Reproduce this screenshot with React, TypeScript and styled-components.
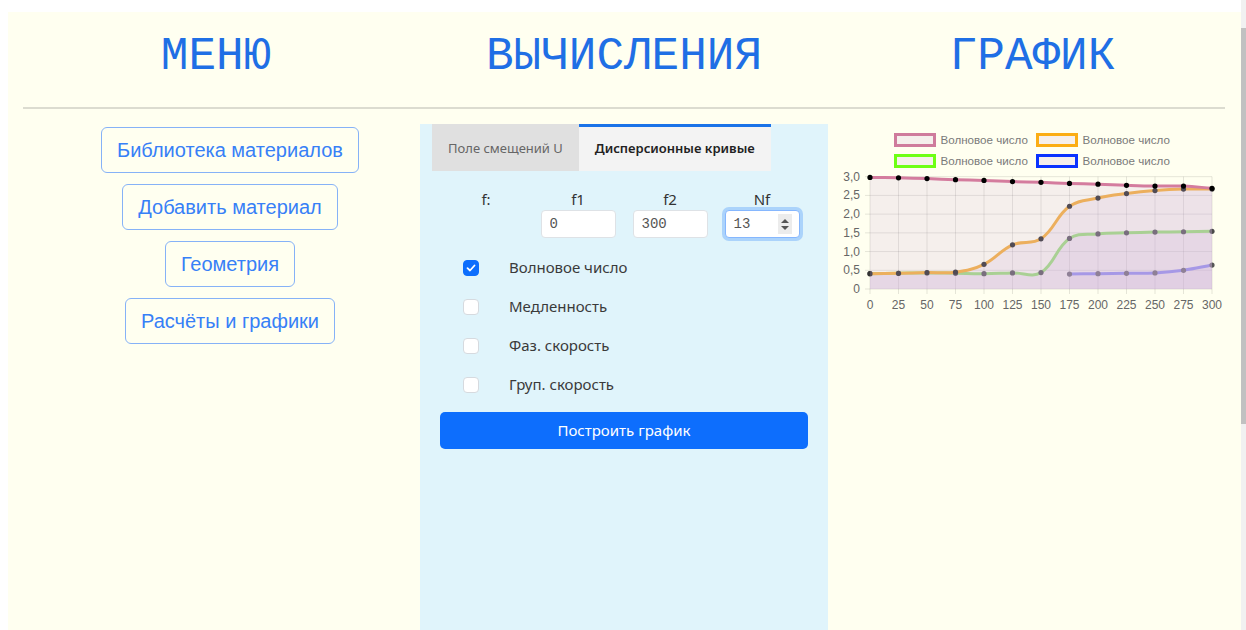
import React from 'react'
import styled, { createGlobalStyle } from 'styled-components'

const GlobalStyle = createGlobalStyle`
  html, body {
    margin: 0;
    padding: 0;
    height: 100%;
    overflow: hidden;
    background: #ffffff;
  }
  #root {
    height: 100%;
  }
  * {
    box-sizing: border-box;
  }
`

const uiFont = `"Noto Sans", "Open Sans", sans-serif`

const Screen = styled.div`
  display: flex;
  height: 100%;
`
const Page = styled.div`
  flex: 1;
  display: flex;
  padding: 12px 0 0 8px;
`
const Sheet = styled.main`
  flex: 1;
  display: flex;
  flex-direction: column;
  background: #fffff0;
`
const ScrollTrack = styled.div`
  width: 5px;
  background: #f1f1f1;
  padding-top: 28px;
`
const ScrollThumb = styled.div`
  height: 396px;
  background: #c1c1c1;
`

const Header = styled.header`
  display: grid;
  grid-template-columns: 416px 400px 1fr;
  padding: 22px 0 27px;
`
const Title = styled.h1`
  margin: 0;
  font: 400 46px/46px 'Courier New', 'Liberation Mono', monospace;
  color: #1f6fe5;
  text-align: center;
`
const Divider = styled.hr`
  margin: 0 16px 0 15px;
  border: 0;
  height: 2px;
  background: #dcdcd0;
`
const Body = styled.div`
  flex: 1;
  display: flex;
  margin-top: 15px;
`

/* left column: menu */
const MenuColumn = styled.nav`
  width: 412px;
  padding: 3px 0 0 32px;
  display: flex;
  flex-direction: column;
  align-items: center;
  gap: 11px;
`
const MenuButton = styled.button`
  font: 400 20px/30px 'Liberation Sans', Arial, sans-serif;
  padding: 7px 15px;
  color: #3780f7;
  background: transparent;
  border: 1px solid #86b2f7;
  border-radius: 6px;
  cursor: pointer;
`

/* middle column: calculations */
const CalcColumn = styled.section`
  width: 408px;
  background: #e0f4fb;
  padding: 0 20px 0 12px;
`
const Tabs = styled.div`
  display: flex;
`
const Tab = styled.button<{ $active?: boolean }>`
  height: 47px;
  padding: 0 16px 3px;
  border: 0;
  border-top: 3px solid ${p => (p.$active ? '#1a73e8' : '#e0e0e0')};
  background: ${p => (p.$active ? '#f3f3f3' : '#e0e0e0')};
  color: ${p => (p.$active ? '#222222' : '#666666')};
  font: ${p => (p.$active ? 600 : 400)} 13px/20px ${uiFont};
`
const CalcForm = styled.form`
  padding-left: 8px;
`
const FreqRow = styled.div`
  display: grid;
  grid-template-columns: repeat(4, 92px);
  margin-top: 18px;
`
const FreqField = styled.div`
  display: flex;
  flex-direction: column;
  align-items: center;
`
const FieldLabel = styled.label`
  font: 400 15px/21px ${uiFont};
  color: #333333;
`
const InputWrap = styled.div`
  position: relative;
`
const NumberInput = styled.input<{ $focused?: boolean }>`
  width: 75px;
  height: 28px;
  padding: 0 8px;
  font: 400 14px 'Liberation Mono', monospace;
  color: #555555;
  background: #ffffff;
  border: 1px solid ${p => (p.$focused ? '#86b7fe' : '#dee2e6')};
  border-radius: 4px;
  outline: none;
  box-shadow: ${p => (p.$focused ? '0 0 0 3px rgba(13, 110, 253, 0.25)' : 'none')};
`
const Spinner = styled.div`
  position: absolute;
  right: 8px;
  top: 4px;
  width: 14px;
  height: 20px;
  background: #ececec;
  display: flex;
  flex-direction: column;
  align-items: center;
  justify-content: center;
  gap: 3px;
`
const SpinArrow = styled.span<{ $down?: boolean }>`
  width: 0;
  height: 0;
  border-left: 4px solid transparent;
  border-right: 4px solid transparent;
  ${p => (p.$down ? 'border-top' : 'border-bottom')}: 4px solid #555555;
`
const Options = styled.div`
  margin-top: 10px;
`
const OptionRow = styled.label`
  height: 39px;
  display: flex;
  align-items: center;
  padding-left: 23px;
  gap: 30px;
  font: 400 15px/21px ${uiFont};
  color: #3a3a3a;
`
const CheckBox = styled.span<{ $checked?: boolean }>`
  width: 16px;
  height: 16px;
  border-radius: 4px;
  display: flex;
  align-items: center;
  justify-content: center;
  background: ${p => (p.$checked ? '#0d6efd' : '#ffffff')};
  border: 1px solid ${p => (p.$checked ? '#0d6efd' : '#d6dadf')};
`
const BuildButton = styled.button`
  width: 100%;
  height: 37px;
  margin-top: 8px;
  border: 0;
  border-radius: 5px;
  background: #0d6efd;
  color: #ffffff;
  font: 400 15px/21px ${uiFont};
`

/* right column: chart */
const ChartColumn = styled.section`
  flex: 1;
  padding: 2px 0 0 8px;
`
const ChartSvg = styled.svg`
  display: block;
  font-family: 'Liberation Sans', Arial, sans-serif;
`

const X0 = 34
const X1 = 376
const Y0 = 163
const YTOP = 50.7
const sx = (v: number) => X0 + (v / 300) * (X1 - X0)
const sy = (v: number) => Y0 - (v / 3) * (Y0 - YTOP)

const freqs = Array.from({ length: 13 }, (_, i) => i * 25)

interface Series {
  values: (number | null)[]
  line: string
  legend: string
  dot: string
}

const series: Series[] = [
  {
    values: [2.98, 2.97, 2.95, 2.92, 2.9, 2.87, 2.85, 2.82, 2.8, 2.77, 2.75, 2.75, 2.69],
    line: '#d47c9e',
    legend: '#cf7b9c',
    dot: '#000000'
  },
  {
    values: [0.41, 0.42, 0.44, 0.45, 0.66, 1.18, 1.34, 2.21, 2.43, 2.55, 2.63, 2.67, 2.67],
    line: '#f4b03e',
    legend: '#fbad14',
    dot: '#333333'
  },
  {
    values: [0.41, 0.42, 0.43, 0.42, 0.41, 0.43, 0.44, 1.35, 1.47, 1.5, 1.52, 1.53, 1.54],
    line: '#97e46c',
    legend: '#6eff14',
    dot: '#4a4a4a'
  },
  {
    values: [null, null, null, null, null, null, null, 0.4, 0.41, 0.42, 0.43, 0.5, 0.64],
    line: '#8485f2',
    legend: '#0a32ff',
    dot: '#555555'
  }
]

const areaFill = 'rgba(205, 175, 222, 0.2)'

// bezier spline with the same tension rule the chart library uses
const splinePath = (pts: [number, number][]) => {
  const t = 0.4
  const cps = pts.map((cur, i) => {
    const prev = pts[i - 1] || cur
    const next = pts[i + 1] || cur
    const d01 = Math.hypot(cur[0] - prev[0], cur[1] - prev[1])
    const d12 = Math.hypot(next[0] - cur[0], next[1] - cur[1])
    const sum = d01 + d12 || 1
    const fa = (t * d01) / sum
    const fb = (t * d12) / sum
    return {
      prev: [cur[0] - fa * (next[0] - prev[0]), cur[1] - fa * (next[1] - prev[1])],
      next: [cur[0] + fb * (next[0] - prev[0]), cur[1] + fb * (next[1] - prev[1])]
    }
  })
  let d = `M${pts[0][0]},${pts[0][1]}`
  for (let i = 1; i < pts.length; i++) {
    const a = cps[i - 1].next
    const b = cps[i].prev
    d += ` C${a[0]},${a[1]} ${b[0]},${b[1]} ${pts[i][0]},${pts[i][1]}`
  }
  return d
}

const pointsOf = (s: Series) =>
  s.values
    .map((v, i) => (v === null ? null : ([sx(freqs[i]), sy(v)] as [number, number])))
    .filter((p): p is [number, number] => p !== null)

const yTicks = [0, 0.5, 1, 1.5, 2, 2.5, 3]
const fmt = (v: number) => (v === 0 ? '0' : v.toFixed(1).replace('.', ','))

const DispersionChart = () => {
  const drawOrder = [...series].reverse()
  return (
    <ChartSvg width={392} height={192} viewBox='0 0 392 192'>
      {series.map((s, i) => {
        const col = i % 2
        const row = Math.floor(i / 2)
        const bx = 59.5 + col * 142
        const by = 8.5 + row * 21
        return (
          <g key={i}>
            <rect x={bx} y={by} width={39} height={11} fill={areaFill} stroke={s.legend} strokeWidth={3} />
            <text x={bx + 45} y={by + 9} fontSize={11.6} fill='#7a7a7a'>
              Волновое число
            </text>
          </g>
        )
      })}

      {yTicks.map(v => (
        <g key={v}>
          <line x1={X0 - 5} x2={X1} y1={sy(v)} y2={sy(v)} stroke='rgba(0,0,0,0.1)' />
          <text x={24} y={sy(v) + 4} fontSize={12} fill='#666666' textAnchor='end'>
            {fmt(v)}
          </text>
        </g>
      ))}
      {freqs.map(f => (
        <g key={f}>
          <line x1={sx(f)} x2={sx(f)} y1={YTOP} y2={Y0 + 5} stroke='rgba(0,0,0,0.1)' />
          <text x={sx(f)} y={183} fontSize={12} fill='#666666' textAnchor='middle'>
            {f}
          </text>
        </g>
      ))}

      {drawOrder.map((s, i) => {
        const pts = pointsOf(s)
        const line = splinePath(pts)
        const area = `${line} L${pts[pts.length - 1][0]},${Y0} L${pts[0][0]},${Y0} Z`
        return (
          <g key={i}>
            <path d={area} fill={areaFill} />
            <path d={line} fill='none' stroke={s.line} strokeWidth={3} strokeLinejoin='round' />
            {pts.map((p, j) => (
              <circle key={j} cx={p[0]} cy={p[1]} r={2.6} fill={s.dot} />
            ))}
          </g>
        )
      })}
    </ChartSvg>
  )
}

const CheckMark = () => (
  <svg width='10' height='8' viewBox='0 0 10 8'>
    <path d='M1.5 4.2 L4 6.5 L8.5 1.5' fill='none' stroke='#ffffff' strokeWidth='1.8' strokeLinecap='round' strokeLinejoin='round' />
  </svg>
)

const menuItems = ['Библиотека материалов', 'Добавить материал', 'Геометрия', 'Расчёты и графики']
const plotOptions = [
  { label: 'Волновое число', checked: true },
  { label: 'Медленность', checked: false },
  { label: 'Фаз. скорость', checked: false },
  { label: 'Груп. скорость', checked: false }
]

const App = () => {
  return (
    <Screen>
      <GlobalStyle />
      <Page>
        <Sheet>
          <Header>
            <Title>МЕНЮ</Title>
            <Title>ВЫЧИСЛЕНИЯ</Title>
            <Title>ГРАФИК</Title>
          </Header>
          <Divider />
          <Body>
            <MenuColumn>
              {menuItems.map(item => (
                <MenuButton key={item}>{item}</MenuButton>
              ))}
            </MenuColumn>

            <CalcColumn>
              <Tabs>
                <Tab>Поле смещений U</Tab>
                <Tab $active>Дисперсионные кривые</Tab>
              </Tabs>
              <CalcForm onSubmit={e => e.preventDefault()}>
                <FreqRow>
                  <FreqField>
                    <FieldLabel>f:</FieldLabel>
                  </FreqField>
                  <FreqField>
                    <FieldLabel>f1</FieldLabel>
                    <NumberInput defaultValue='0' />
                  </FreqField>
                  <FreqField>
                    <FieldLabel>f2</FieldLabel>
                    <NumberInput defaultValue='300' />
                  </FreqField>
                  <FreqField>
                    <FieldLabel>Nf</FieldLabel>
                    <InputWrap>
                      <NumberInput $focused defaultValue='13' />
                      <Spinner>
                        <SpinArrow />
                        <SpinArrow $down />
                      </Spinner>
                    </InputWrap>
                  </FreqField>
                </FreqRow>
                <Options>
                  {plotOptions.map(o => (
                    <OptionRow key={o.label}>
                      <CheckBox $checked={o.checked}>{o.checked && <CheckMark />}</CheckBox>
                      {o.label}
                    </OptionRow>
                  ))}
                </Options>
                <BuildButton type='submit'>Построить график</BuildButton>
              </CalcForm>
            </CalcColumn>

            <ChartColumn>
              <DispersionChart />
            </ChartColumn>
          </Body>
        </Sheet>
      </Page>
      <ScrollTrack>
        <ScrollThumb />
      </ScrollTrack>
    </Screen>
  )
}

export default App
